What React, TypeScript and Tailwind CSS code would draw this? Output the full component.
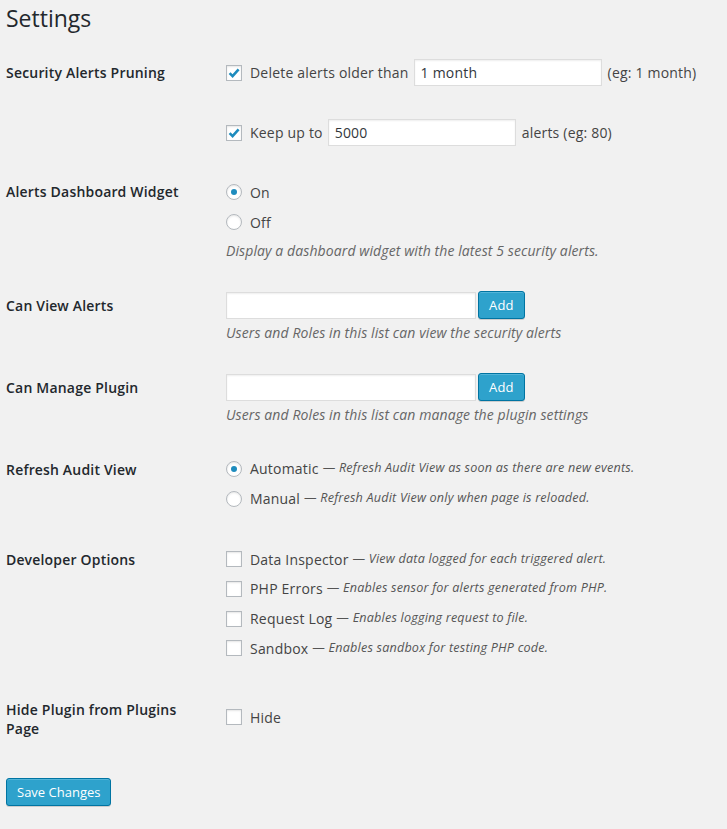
import React from 'react'

const Checkbox: React.FC<{ checked?: boolean }> = ({ checked }) => (
  <span className="relative inline-block w-[16px] h-[16px] shrink-0 bg-white border border-[#b4b9be] shadow-[inset_0_1px_2px_rgba(0,0,0,0.1)]">
    {checked && (
      <svg viewBox="0 0 16 16" className="absolute left-[-1px] top-[-1px] w-[16px] h-[16px]">
        <path d="M3.6 8.2 L6.6 11.2 L12.6 4.4" fill="none" stroke="#1e8cbe" strokeWidth="2.6" strokeLinecap="butt" />
      </svg>
    )}
  </span>
)

const Radio: React.FC<{ checked?: boolean }> = ({ checked }) => (
  <span className="flex items-center justify-center w-[16px] h-[16px] shrink-0 rounded-full bg-white border border-[#b4b9be] shadow-[inset_0_1px_2px_rgba(0,0,0,0.1)]">
    {checked && <span className="block w-[6px] h-[6px] rounded-full bg-[#1e8cbe]" />}
  </span>
)

const TextInput: React.FC<{ value?: string; className?: string }> = ({ value, className }) => (
  <div
    className={`h-[27px] bg-white border border-[#dddddd] shadow-[inset_0_1px_2px_rgba(0,0,0,0.07)] px-[6px] text-[14px] leading-[25px] tracking-[0.2px] text-[#32373c] ${className ?? ''}`}
  >
    {value}
  </div>
)

const Button: React.FC<{ children: React.ReactNode; className?: string }> = ({ children, className }) => (
  <button
    className={`h-[28px] px-[10px] pb-[1px] text-[13px] leading-[26px] text-white bg-[#2ea2cc] border border-[#0074a2] rounded-[3px] shadow-[inset_0_1px_0_rgba(120,200,230,0.5),0_1px_0_rgba(0,0,0,0.15)] ${className ?? ''}`}
  >
    {children}
  </button>
)

const Desc: React.FC<{ children: React.ReactNode }> = ({ children }) => (
  <p className="mt-[4px] text-[14px] leading-[20px] tracking-[0.1px] italic text-[#666666]">{children}</p>
)

const OptionLine: React.FC<{ control: React.ReactNode; label: string; note?: string }> = ({ control, label, note }) => (
  <div className="flex items-center h-[29.7px]">
    {control}
    <span className="ml-[8px] text-[14px] tracking-[0.2px] text-[#444444]">{label}</span>
    {note && (
      <span className="ml-[4px] text-[12.6px] text-[#555555]">
        — <span className="italic">{note}</span>
      </span>
    )}
  </div>
)

const labelCls =
  "w-[200px] mr-[20px] shrink-0 font-['Open_Sans_SemiBold','Open_Sans',sans-serif] text-[14px] font-semibold leading-[18px] text-[#23282d]"

export default function App() {
  return (
    <div className="min-h-screen bg-[#f1f1f1] pl-[6px] font-['Open_Sans',sans-serif] text-[14px] tracking-[0.2px] text-[#444444]">
      <h1 className="pt-[4px] mb-[10px] text-[23px] leading-[29px] tracking-normal font-normal text-[#23282d]">Settings</h1>

      {/* Security Alerts Pruning */}
      <div className="flex">
        <div className={`${labelCls} pt-[21px]`}>Security Alerts Pruning</div>
        <div className="pt-[16px] pb-[15px] flex flex-col gap-[33px]">
          <div className="flex items-center h-[27px]">
            <Checkbox checked />
            <span className="ml-[8px]">Delete alerts older than</span>
            <TextInput value="1 month" className="ml-[5px] w-[188px]" />
            <span className="ml-[6px]">(eg: 1 month)</span>
          </div>
          <div className="flex items-center h-[27px]">
            <Checkbox checked />
            <span className="ml-[8px]">Keep up to</span>
            <TextInput value="5000" className="ml-[5px] w-[188px]" />
            <span className="ml-[6px]">alerts (eg: 80)</span>
          </div>
        </div>
      </div>

      {/* Alerts Dashboard Widget */}
      <div className="flex">
        <div className={`${labelCls} pt-[22px]`}>Alerts Dashboard Widget</div>
        <div className="pt-[16px] pb-[15px]">
          <div className="flex items-center h-[30px]">
            <Radio checked />
            <span className="ml-[8px]">On</span>
          </div>
          <div className="flex items-center h-[30px]">
            <Radio />
            <span className="ml-[8px]">Off</span>
          </div>
          <Desc>Display a dashboard widget with the latest 5 security alerts.</Desc>
        </div>
      </div>

      {/* Can View Alerts */}
      <div className="flex">
        <div className={`${labelCls} pt-[21px]`}>Can View Alerts</div>
        <div className="pt-[16px] pb-[15px]">
          <div className="flex items-center">
            <TextInput className="w-[250px]" />
            <Button className="ml-[2px] -mt-[1px]">Add</Button>
          </div>
          <Desc>Users and Roles in this list can view the security alerts</Desc>
        </div>
      </div>

      {/* Can Manage Plugin */}
      <div className="flex">
        <div className={`${labelCls} pt-[21px]`}>Can Manage Plugin</div>
        <div className="pt-[16px] pb-[15px]">
          <div className="flex items-center">
            <TextInput className="w-[250px]" />
            <Button className="ml-[2px] -mt-[1px]">Add</Button>
          </div>
          <Desc>Users and Roles in this list can manage the plugin settings</Desc>
        </div>
      </div>

      {/* Refresh Audit View */}
      <div className="flex">
        <div className={`${labelCls} pt-[21px]`}>Refresh Audit View</div>
        <div className="pt-[14px] pb-[17px]">
          <OptionLine control={<Radio checked />} label="Automatic" note="Refresh Audit View as soon as there are new events." />
          <OptionLine control={<Radio />} label="Manual" note="Refresh Audit View only when page is reloaded." />
        </div>
      </div>

      {/* Developer Options */}
      <div className="flex">
        <div className={`${labelCls} pt-[21px]`}>Developer Options</div>
        <div className="pt-[14px] pb-[17px]">
          <OptionLine control={<Checkbox />} label="Data Inspector" note="View data logged for each triggered alert." />
          <OptionLine control={<Checkbox />} label="PHP Errors" note="Enables sensor for alerts generated from PHP." />
          <OptionLine control={<Checkbox />} label="Request Log" note="Enables logging request to file." />
          <OptionLine control={<Checkbox />} label="Sandbox" note="Enables sandbox for testing PHP code." />
        </div>
      </div>

      {/* Hide Plugin */}
      <div className="flex">
        <div className={`${labelCls} pt-[20px] pb-[20px] leading-[19px]`}>Hide Plugin from Plugins Page</div>
        <div className="pt-[22px]">
          <div className="flex items-center h-[30px]">
            <Checkbox />
            <span className="ml-[8px]">Hide</span>
          </div>
        </div>
      </div>

      <div className="pt-[20px]">
        <Button className="tracking-normal">Save Changes</Button>
      </div>
    </div>
  )
}
